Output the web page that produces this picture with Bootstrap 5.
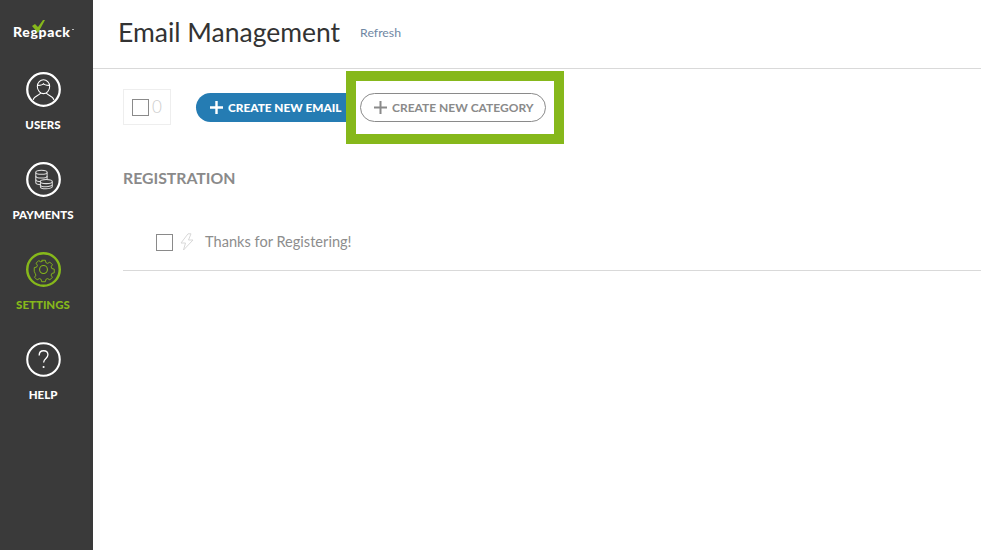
<!DOCTYPE html>
<html lang="en"><head><meta charset="utf-8"><title>Email Management</title>
<link rel="stylesheet" href="https://cdn.jsdelivr.net/npm/bootstrap@5.3.0/dist/css/bootstrap.min.css">
<style>
html,body{height:100%;}
body{font-family:Lato,"Liberation Sans",sans-serif;background:#fff;overflow:hidden;}
.shell{height:550px;}
.rail{width:93px;background:#3a3a3a;flex:none;}
.brand{height:54px;padding-top:16px;padding-left:12px;}
.rail-item{height:90px;color:#fff;font-size:11.5px;font-weight:900;line-height:14px;text-decoration:none;padding-right:7px;}
.rail-item svg{display:block;margin-bottom:11px;}
.rail-item.on{color:#86b81b;}
.rail-first{margin-top:18px;}
.brand-word{font-family:Lato,sans-serif;font-weight:900;font-size:14px;fill:#fff;}
.top-head{height:69px;border-bottom:1px solid #d9d9d9;padding-left:25px;padding-top:13px;}
.page-title{font-size:26.5px;font-weight:400;color:#333;line-height:39px;margin:0;}
.refresh{font-size:12.300px;color:#6f87a3;margin-left:20px;text-decoration:none;margin-top:11px;}
.toolbar{padding-left:30px;height:75px;}
.count-box{width:48px;height:36px;border:1px solid #eee;margin-top:20px;padding-left:8px;color:#ccc;font-size:17px;}
.tick{width:17px;height:17px;border:1px solid #8a8a8a;background:#fff;display:block;flex:none;}
.count-num{margin-left:3px;font-weight:300;}
.pill{height:29px;border-radius:15px;font-size:11.800px;font-weight:900;line-height:29px;white-space:nowrap;padding:0;}
.pill-blue{width:150px;margin-left:25px;margin-top:24px;background:#257cb3;color:#fff;padding-left:14px;border-radius:15px 0 0 15px;}
.call-out{width:218px;height:73px;border:10px solid #86b81b;margin-top:2px;padding:12px 0 0 4px;}
.pill-line{width:186px;height:29px;border:1px solid #8a8a8a;color:#8a8a8a;padding-left:13px;line-height:27px;background:#fff;font-weight:700;font-size:12px;}
.pill svg{flex:none;margin-right:5px;}
.section-name{font-size:15.800px;font-weight:700;color:#8a8a8a;margin:24px 0 0 30px;line-height:20px;}
.mail-row{margin-left:30px;margin-top:24px;height:59px;border-bottom:1px solid #d9d9d9;padding-left:33px;padding-top:2px;}
.mail-name{font-size:14.600px;color:#8d8d8d;margin-left:11px;line-height:20px;}
.bolt{margin-left:7px;}
</style></head><body>
<div class="shell d-flex">
<nav class="rail d-flex flex-column">
  <div class="brand">
    <svg width="66" height="32" viewBox="0 0 66 32"><text class="brand-word" x="1" y="21" textLength="57">Regpack</text><path d="M20 10l3-2 3 3L31 4h2L26 17z" fill="#86b81b"/><rect x="60" y="13" width="2" height="1" fill="#bbb"/></svg>
  </div>
  <a class="rail-item rail-first d-flex flex-column align-items-center" href="#">
    <svg width="35" height="35" viewBox="0 0 34 34" fill="none" stroke="#fff"><circle cx="17" cy="17" r="15.800" stroke-width="2.200"/><path d="M11 14c0-4 3-6.500 6-6.500s6 2.500 6 6.500c0 4-3 7-6 7s-6-3-6-7zM11.500 13c3 0 5-.5 5.500-1.500.5 1 3 1.500 5.500 1.500M14 20.500c0 2-6 2.500-7 6.500M20 20.500c0 2 6 2.500 7 6.500" stroke-width="1"/></svg>
    USERS</a>
  <a class="rail-item d-flex flex-column align-items-center" href="#">
    <svg width="35" height="35" viewBox="0 0 34 34" fill="none" stroke="#fff"><circle cx="17" cy="17" r="15.800" stroke-width="2.200"/><g stroke-width="1" stroke="#ddd" fill="#3a3a3a"><path d="M9.500 10v10c0 1 2.500 2 5.500 2s5.500-1 5.500-2V10"/><ellipse cx="15" cy="10" rx="5.500" ry="2"/><path d="M9.500 13.500c0 1 2.500 2 5.500 2s5.500-1 5.500-2M9.500 17c0 1 2.500 2 5.500 2s5.500-1 5.500-2" fill="none"/><path d="M14 19v5c0 1 2.500 2 5.500 2s6-1 6-2v-5"/><ellipse cx="19.700" cy="19" rx="5.800" ry="2"/><path d="M14 22c0 1 2.500 2 5.500 2s6-1 6-2" fill="none"/></g></svg>
    PAYMENTS</a>
  <a class="rail-item on d-flex flex-column align-items-center" href="#">
    <svg width="35" height="35" viewBox="0 0 34 34" fill="none" stroke="#86b81b"><circle cx="17" cy="17" r="15.800" stroke-width="2.400"/><circle cx="17" cy="17" r="3.800" stroke-width="1"/><path d="M15 7h4l.6 2.600 1.900.8 2.300-1.400 2.800 2.800-1.400 2.300.8 1.900 2.600.6v4l-2.600.6-.8 1.900 1.400 2.300-2.800 2.800-2.300-1.400-1.900.8-.6 2.600h-4l-.6-2.600-1.900-.8-2.300 1.400-2.800-2.800 1.400-2.300-.8-1.900L7 19v-4l2.600-.6.8-1.900L9 10.200 11.800 7.400l2.300 1.400 1.900-.8z" stroke-width="1" transform="translate(1.700 1.700) scale(.9)"/></svg>
    SETTINGS</a>
  <a class="rail-item d-flex flex-column align-items-center" href="#">
    <svg width="35" height="35" viewBox="0 0 34 34" fill="none" stroke="#fff"><circle cx="17" cy="17" r="15.800" stroke-width="2"/><path d="M12.800 13c0-3 2-4.500 4.300-4.500s4.200 1.500 4.200 4c0 3.500-4.200 3.500-4.200 7.500" stroke-width="1.300"/><circle cx="17.100" cy="24.300" r="1" fill="#fff" stroke="none"/></svg>
    HELP</a>
</nav>
<main class="flex-grow-1">
  <header class="top-head d-flex align-items-start">
    <h1 class="page-title">Email Management</h1>
    <a class="refresh lh-base" href="#">Refresh</a>
  </header>
  <div class="toolbar d-flex align-items-start">
    <div class="count-box d-flex align-items-center"><span class="tick"></span><span class="count-num">0</span></div>
    <a class="pill pill-blue d-flex align-items-center text-decoration-none" href="#"><svg width="13" height="13" viewBox="0 0 14 14"><path d="M5.700 0h2.600v5.700H14v2.600H8.300V14H5.700V8.300H0V5.700h5.700z" fill="#fff"/></svg>CREATE NEW EMAIL</a>
    <div class="call-out"><a class="pill pill-line d-flex align-items-center text-decoration-none" href="#"><svg width="13" height="13" viewBox="0 0 13 13"><path d="M5.500 0h2v5.500H13v2H7.500V13h-2V7.500H0v-2h5.500z" fill="#8a8a8a"/></svg>CREATE NEW CATEGORY</a></div>
  </div>
  <h2 class="section-name">REGISTRATION</h2>
  <div class="mail-row d-flex align-items-center">
    <span class="tick"></span>
    <svg class="bolt" width="14" height="18" viewBox="0 0 14 18" fill="none" stroke="#d8d8d8"><path d="M8 .8L1 10h4.500L3.500 17 13 7H8.500L11 .8z"/></svg>
    <span class="mail-name">Thanks for Registering!</span>
  </div>
</main>
</div>
<script src="https://cdn.jsdelivr.net/npm/bootstrap@5.3.0/dist/js/bootstrap.bundle.min.js"></script>
</body></html>
